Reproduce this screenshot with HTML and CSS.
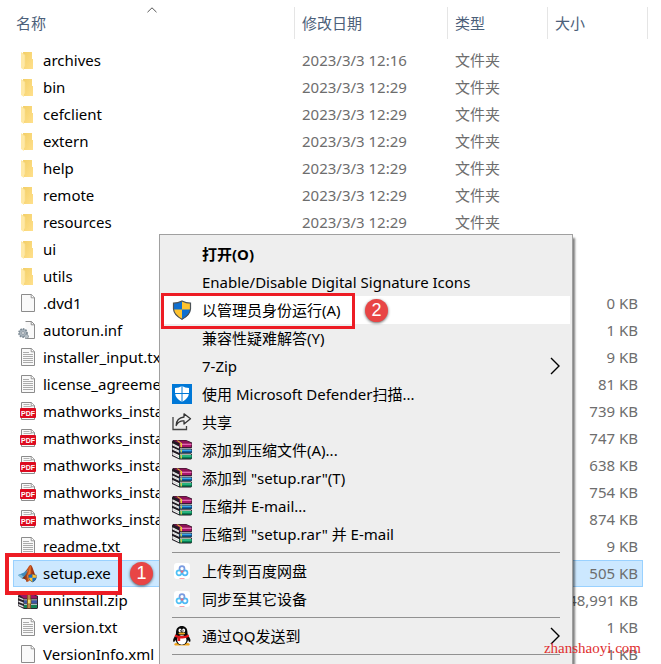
FILE: index.html
```
<!DOCTYPE html>
<html lang="zh-CN">
<head>
<meta charset="utf-8">
<title>setup.exe</title>
<link rel="stylesheet" href="styles.css">
</head>
<body>
<svg class="defs" aria-hidden="true">
  <defs>
    <linearGradient id="gold" x1="0" y1="0" x2="1" y2="1"><stop offset="0" stop-color="#f3cf67"/><stop offset="1" stop-color="#ffe08c"/></linearGradient>
    <linearGradient id="flame" x1="0" y1="0" x2="1" y2="0"><stop offset="0" stop-color="#4b2018"/><stop offset=".45" stop-color="#c9551f"/><stop offset="1" stop-color="#7c1a10"/></linearGradient>
  </defs>
  <symbol id="folder" viewBox="0 0 20 20">
    <path d="M5 1h9v7h1v10H6z" fill="url(#gold)"/>
    <path d="M3 1.5L7 4v11l-1 1v3l-3-2z" fill="#ffe9a6"/>
    <path d="M3 1.5L7 4v11" fill="none" stroke="#f7dc8c" stroke-width=".6"/>
  </symbol>
  <symbol id="page" viewBox="0 0 20 20">
    <path d="M3.500 .5h10l3 3v14h-13z" fill="#f9f9f9" stroke="#8c8c8c"/>
    <path d="M13.200 .5v3.300h3.300" fill="#fff" stroke="#8c8c8c" stroke-width=".9"/>
  </symbol>
  <symbol id="text" viewBox="0 0 20 20">
    <use href="#page"/>
    <path d="M5 4.500h6M5 6.500h10M5 8.500h10M5 10.500h10M5 12.500h10M5 14.500h10" stroke="#a2a2a2" stroke-width=".9"/>
  </symbol>
  <symbol id="inf" viewBox="0 0 20 20">
    <path d="M7.500 .5h6l3 3v14h-9" fill="#f9f9f9" stroke="#8c8c8c"/>
    <path d="M13.200 .5v3.300h3.300" fill="none" stroke="#8c8c8c"/>
    <circle cx="5" cy="12" r="4" fill="#a9b4bd" stroke="#7e8b95" stroke-width="1.800" stroke-dasharray="1.600 1"/>
    <circle cx="5" cy="12" r="1.300" fill="#fff" stroke="#6f7b84" stroke-width=".6"/>
    <circle cx="8.500" cy="15.500" r="2" fill="#b9c1c7" stroke="#7e8b95" stroke-dasharray="1 .7"/>
  </symbol>
  <symbol id="pdf" viewBox="0 0 20 20">
    <use href="#page"/>
    <path d="M5.500 2.500h6M5.500 4.500h8" stroke="#a2a2a2" stroke-width=".8"/>
    <rect x="2" y="6" width="16" height="10" rx="1" fill="#dd0b20"/>
    <text class="pdf-label" x="10" y="13.500" text-anchor="middle">PDF</text>
  </symbol>
  <symbol id="shield" viewBox="0 0 20 20">
    <path d="M10 1Q6 3.200 1.500 3.200V9Q2 15 10 19.500Z" fill="#0f6fd0"/>
    <path d="M10 1Q14 3.200 18.500 3.200V9Q18 15 10 19.500Z" fill="#ffc32e"/>
    <path d="M1.500 9.500H10V19.500Q2 15.500 1.500 9.500Z" fill="#ffc32e"/>
    <path d="M18.500 9.500H10V19.500Q18 15.500 18.500 9.500Z" fill="#0f6fd0"/>
    <path d="M10 1Q6 3.200 1.500 3.200V9Q2 15 10 19.300Q18 15 18.500 9V3.200Q14 3.200 10 1Z" fill="none" stroke="#4c5257" stroke-width="1.200"/>
  </symbol>
  <symbol id="matlab" viewBox="0 0 20 20">
    <path d="M0 11L6 8.500 9.500 5 8.500 12 4 14.500Z" fill="#3f88b8"/>
    <path d="M0 11l4 3.500 2-1.500-3-2.500Z" fill="#7bbad8"/>
    <path d="M6 8.500C9 7 10.500 1 12.500 1c2 0 3.500 8 6 13-3-2-4-1-5.500 1-1.500 2-3 3-4.500 3-.5-3-2-3.500-4.500-3.500C6 13 9 10 9.500 6Z" fill="url(#flame)"/>
    <path d="M12.500 1c-1 2-1 7-3.500 11l1.500 5c2-3 2.500-9 2-16Z" fill="#ef7d2c"/>
    <svg x="10" y="9.500" width="9" height="9" viewBox="0 0 20 20"><use href="#shield"/></svg>
  </symbol>
  <symbol id="books" viewBox="0 0 20 20">
    <path d="M0 1.500L1 0h13l6 2.500v5l-1 1 1 1v3l-1 1 1 1v4l-1 1H7.500L0 16z" fill="#201a22"/>
    <path d="M.5 3.200L7 6.500v2L.5 5.500zM.5 7.500L7 10.500v2.200L.5 9.800zM.5 12L7 15v3.300L.5 15z" fill="#f6f6f6"/>
    <path d="M.5 4.500L7 7.500M.5 8.700L7 11.700M.5 13.500l6.500 3.200" stroke="#aaa" stroke-width=".5"/>
    <path d="M1 .6h13l5.500 2.200L8 3.400z" fill="#8e1256"/>
    <path d="M7.500 3.200h12v4h-12z" fill="#a8166a"/>
    <path d="M8 4.300h11.500" stroke="#ec72b8" stroke-width="1.200"/>
    <path d="M8 8.400h11v1H8z" fill="#e8f3f5"/>
    <path d="M7.500 9.600h12.300v3H7.500z" fill="#0c5fa6"/>
    <path d="M8 10.400h11.500" stroke="#41aff0" stroke-width="1"/>
    <path d="M8 13.700h11v1H8z" fill="#e2f3e6"/>
    <path d="M7.500 15h12.300v3.500H7.500z" fill="#078455"/>
    <path d="M8 16h11.500" stroke="#42dba0" stroke-width="1.100"/>
    <path d="M4.500 .6H6l4 2.600v4H8.500v-4z" fill="#e8d32e"/>
    <path d="M8.500 9.600H10v3H8.500zM8.500 15H10v3.500H8.500z" fill="#c7c951"/>
  </symbol>
  <symbol id="zip" viewBox="0 0 20 20">
    <path d="M1 3h15l4 2v12l-1 1H6l-6-3V5z" fill="#2a252e"/>
    <path d="M1 3.500h14l4 2v2H6z" fill="#9b1762"/><path d="M6 8.500h13v1H6zM6 12.800h13v1H6z" fill="#d5ebf0"/>
    <path d="M6 9.500h13v2.800H6z" fill="#3d55a5"/><path d="M6 14h13v3H6z" fill="#168254"/>
    <path d="M.5 6l5 2v1.300l-5-2zM.5 9.500l5 2V13l-5-2zM.5 13l5 2v1.500l-5-2z" fill="#e8e8e8"/>
    <path d="M9 3.500h4v14H9z" fill="#8b5526"/><path d="M9.500 8h3.500v5H9.500z" fill="#f4da65" stroke="#75501a" stroke-width=".8"/><path d="M11 4v4M11 13v4" stroke="#e2b878"/>
  </symbol>
  <symbol id="defender" viewBox="0 0 20 20">
    <path d="M0 0h20v20H0z" fill="#0078d7"/>
    <path d="M10 2q-3 2-7 2v5q.5 5.500 7 9 6.500-3.500 7-9V4q-4 0-7-2z" fill="#fff"/><path d="M10 2v16M3 9.500h14" stroke="#0078d7"/>
  </symbol>
  <symbol id="share" viewBox="0 0 20 20">
    <path d="M1 5v12.500h13.500V14" fill="none" stroke="#444" stroke-width="1.300"/>
    <path d="M12 1.800l6.500 5L12 12V9Q7 8.500 4.200 13.500 4.500 5.800 12 5z" fill="none" stroke="#333" stroke-width="1.300" stroke-linejoin="round"/>
  </symbol>
  <symbol id="cloud" viewBox="0 0 20 20">
    <rect x="2" y="2" width="16" height="16" rx="3" fill="#fff"/>
    <circle cx="10" cy="7.700" r="2.500" fill="none" stroke="#7a9be0" stroke-width="1.700"/>
    <circle cx="7" cy="11.800" r="2.500" fill="none" stroke="#4fc1f5" stroke-width="1.700"/><circle cx="13" cy="11.800" r="2.500" fill="none" stroke="#4fb8f5" stroke-width="1.700"/>
    <path d="M7.800 8.800q2.200 2 4.400 0L10 12.500z" fill="#f0697b"/><path d="M7.500 17.500h5" stroke="#f5a3ad"/>
  </symbol>
  <symbol id="qq" viewBox="0 0 20 20">
    <path d="M3 19.500Q1 18 4 17h12q3 1 1 2.500z" fill="#f1a51b"/>
    <path d="M4 7C4 2 6.500 0 9.800 0S15.500 2 15.500 7q0 1.500 1 3 3 4 1.500 6-1 0-2-2-1 5-6.200 5T3.600 14q-1 2-2 2-1.500-2 1.400-6 1-1.500 1-3z" fill="#080808"/>
    <ellipse cx="9.800" cy="14" rx="4.700" ry="4.700" fill="#fff"/>
    <ellipse cx="8" cy="4.500" rx="1.500" ry="2" fill="#fff"/><ellipse cx="11.600" cy="4.500" rx="1.500" ry="2" fill="#fff"/><circle cx="8.500" cy="4.800" r=".6"/><circle cx="11.100" cy="4.800" r=".6"/>
    <ellipse cx="9.800" cy="7.500" rx="3.300" ry="1" fill="#efae24"/>
    <path d="M3 8.500q7 3 13.600 0l.5 2.300q-3 1.700-6.600 1.700l-2.300-.1V15H5.500v-3.200L2.700 10.700z" fill="#df171c"/>
  </symbol>
</svg>

<main class="explorer">
  <table class="files">
    <colgroup><col><col class="col-date"><col class="col-type"><col class="col-size"><col class="col-end"></colgroup>
    <thead>
      <tr><th class="name"><span class="head">名称<svg class="sort" viewBox="0 0 10 6"><path d="M.5 5.200L5 .8l4.500 4.400"/></svg></span></th><th><span class="head">修改日期</span></th><th><span class="head">类型</span></th><th><span class="head open">大小</span></th><th><span class="head"></span></th></tr>
    </thead>
    <tbody>
      <tr><td><span class="file"><svg><use href="#folder"/></svg>archives</span></td><td>2023/3/3 12:16</td><td>文件夹</td><td></td><td></td></tr>
      <tr><td><span class="file"><svg><use href="#folder"/></svg>bin</span></td><td>2023/3/3 12:29</td><td>文件夹</td><td></td><td></td></tr>
      <tr><td><span class="file"><svg><use href="#folder"/></svg>cefclient</span></td><td>2023/3/3 12:29</td><td>文件夹</td><td></td><td></td></tr>
      <tr><td><span class="file"><svg><use href="#folder"/></svg>extern</span></td><td>2023/3/3 12:29</td><td>文件夹</td><td></td><td></td></tr>
      <tr><td><span class="file"><svg><use href="#folder"/></svg>help</span></td><td>2023/3/3 12:29</td><td>文件夹</td><td></td><td></td></tr>
      <tr><td><span class="file"><svg><use href="#folder"/></svg>remote</span></td><td>2023/3/3 12:29</td><td>文件夹</td><td></td><td></td></tr>
      <tr><td><span class="file"><svg><use href="#folder"/></svg>resources</span></td><td>2023/3/3 12:29</td><td>文件夹</td><td></td><td></td></tr>
      <tr><td><span class="file"><svg><use href="#folder"/></svg>ui</span></td><td></td><td></td><td></td><td></td></tr>
      <tr><td><span class="file"><svg><use href="#folder"/></svg>utils</span></td><td></td><td></td><td></td><td></td></tr>
      <tr><td><span class="file"><svg><use href="#page"/></svg>.dvd1</span></td><td></td><td></td><td class="size">0 KB</td><td></td></tr>
      <tr><td><span class="file"><svg><use href="#inf"/></svg>autorun.inf</span></td><td></td><td></td><td class="size">1 KB</td><td></td></tr>
      <tr><td><span class="file"><svg><use href="#text"/></svg>installer_input.txt</span></td><td></td><td></td><td class="size">9 KB</td><td></td></tr>
      <tr><td><span class="file"><svg><use href="#text"/></svg>license_agreement</span></td><td></td><td></td><td class="size">81 KB</td><td></td></tr>
      <tr><td><span class="file"><svg><use href="#pdf"/></svg>mathworks_install</span></td><td></td><td></td><td class="size">739 KB</td><td></td></tr>
      <tr><td><span class="file"><svg><use href="#pdf"/></svg>mathworks_install</span></td><td></td><td></td><td class="size">747 KB</td><td></td></tr>
      <tr><td><span class="file"><svg><use href="#pdf"/></svg>mathworks_install</span></td><td></td><td></td><td class="size">638 KB</td><td></td></tr>
      <tr><td><span class="file"><svg><use href="#pdf"/></svg>mathworks_install</span></td><td></td><td></td><td class="size">754 KB</td><td></td></tr>
      <tr><td><span class="file"><svg><use href="#pdf"/></svg>mathworks_install</span></td><td></td><td></td><td class="size">874 KB</td><td></td></tr>
      <tr><td><span class="file"><svg><use href="#text"/></svg>readme.txt</span></td><td></td><td></td><td class="size">9 KB</td><td></td></tr>
      <tr class="selected"><td><span class="file"><svg><use href="#matlab"/></svg>setup.exe</span></td><td></td><td></td><td class="size">505 KB</td><td></td></tr>
      <tr><td><span class="file"><svg><use href="#zip"/></svg>uninstall.zip</span></td><td></td><td></td><td class="size">48,991 KB</td><td></td></tr>
      <tr><td><span class="file"><svg><use href="#text"/></svg>version.txt</span></td><td></td><td></td><td class="size">1 KB</td><td></td></tr>
      <tr><td><span class="file"><svg><use href="#page"/></svg>VersionInfo.xml</span></td><td></td><td></td><td class="size">1 KB</td><td></td></tr>
    </tbody>
  </table>

  <div class="menu" role="menu">
    <button class="item default" role="menuitem"><span class="icon"></span>打开(O)</button>
    <button class="item" role="menuitem"><span class="icon"></span>Enable/Disable Digital Signature Icons</button>
    <button class="item active" role="menuitem"><svg class="icon"><use href="#shield"/></svg>以管理员身份运行(A)</button>
    <button class="item" role="menuitem"><span class="icon"></span>兼容性疑难解答(Y)</button>
    <button class="item" role="menuitem"><span class="icon"></span>7-Zip<svg class="more" viewBox="0 0 10 18"><path d="M1 1l8 8-8 8"/></svg></button>
    <button class="item" role="menuitem"><svg class="icon"><use href="#defender"/></svg>使用 Microsoft Defender扫描...</button>
    <button class="item" role="menuitem"><svg class="icon"><use href="#share"/></svg>共享</button>
    <button class="item" role="menuitem"><svg class="icon"><use href="#books"/></svg>添加到压缩文件(A)...</button>
    <button class="item" role="menuitem"><svg class="icon"><use href="#books"/></svg>添加到 "setup.rar"(T)</button>
    <button class="item" role="menuitem"><svg class="icon"><use href="#books"/></svg>压缩并 E-mail...</button>
    <button class="item" role="menuitem"><svg class="icon"><use href="#books"/></svg>压缩到 "setup.rar" 并 E-mail</button>
    <hr>
    <button class="item" role="menuitem"><svg class="icon"><use href="#cloud"/></svg>上传到百度网盘</button>
    <button class="item" role="menuitem"><svg class="icon"><use href="#cloud"/></svg>同步至其它设备</button>
    <hr>
    <button class="item" role="menuitem"><svg class="icon"><use href="#qq"/></svg>通过QQ发送到<svg class="more" viewBox="0 0 10 18"><path d="M1 1l8 8-8 8"/></svg></button>
    <hr>
  </div>

  <div class="frame frame-file"></div>
  <div class="frame frame-menu"></div>
  <span class="badge badge-one">1</span>
  <span class="badge badge-two">2</span>
  <span class="watermark">zhanshaoyi.com</span>
</main>
</body>
</html>
```
FILE: styles.css
```
* { box-sizing: border-box; }

body {
  margin: 0;
  background: #fff;
  color: #000;
  font: 15px/27px "Noto Sans", "Noto Sans CJK SC", sans-serif;
}

.defs { position: absolute; width: 0; height: 0; }
.pdf-label { fill: #fff; font: 700 7px "Liberation Sans", Arial, sans-serif; }

.explorer {
  position: relative;
  height: 100vh;
  overflow: hidden;
}

/* File list */
.files {
  width: calc(100% - 26px);
  margin-left: 13px;
  table-layout: fixed;
  border-spacing: 0;
  white-space: nowrap;
}
.col-date { width: 153px; }
.col-type { width: 100px; }
.col-size { width: 95px; }
.col-end { width: 5px; }

th {
  padding: 7px 0 8px;
  color: #4c607a;
  font-weight: 400;
  text-align: left;
}
.head {
  display: block;
  position: relative;
  height: 32px;
  padding-left: 7px;
  border-right: 1px solid #e5e5e5;
  line-height: 32px;
}
.name .head { padding-left: 3px; }
.head.open { border-right: 0; }
th:last-child .head { padding: 0; }
.sort {
  position: absolute;
  top: 0;
  left: 50%;
  width: 10px;
  height: 6px;
  margin-left: -7px;
  fill: none;
  stroke: #555;
}

td {
  height: 27px;
  padding: 0 0 0 7px;
  color: #6d6d6d;
  line-height: 27px;
}
td:first-child { padding-left: 5px; color: #000; }
td:last-child { padding: 0; }
td.size { padding-left: 0; padding-right: 5px; text-align: right; }
.file {
  display: flex;
  align-items: center;
  gap: 5px;
}
.file svg { flex: none; width: 20px; height: 20px; }

.selected td:not(:last-child) {
  background: #cce8ff;
  box-shadow: inset 0 1px #99d1ff, inset 0 -1px #99d1ff;
}
.selected td:first-child { box-shadow: inset 0 1px #99d1ff, inset 0 -1px #99d1ff, inset 1px 0 #99d1ff; }
.selected td.size { box-shadow: inset 0 1px #99d1ff, inset 0 -1px #99d1ff, inset -1px 0 #99d1ff; }

/* Context menu */
.menu {
  position: absolute;
  top: 234px;
  bottom: -10px;
  left: 159px;
  width: 414px;
  padding: 5px 2px;
  border: 1px solid #a0a0a0;
  background: #eee;
  box-shadow: 2px 4px 2px rgba(0, 0, 0, .5);
}
.item {
  display: flex;
  align-items: center;
  gap: 10px;
  width: 100%;
  height: 28px;
  padding: 0 10px;
  border: 0;
  background: none;
  color: #000;
  font: inherit;
  text-align: left;
  white-space: pre;
}
.item.default { font-weight: 700; }
.item.active { background: #fff; }
.icon { flex: none; width: 20px; height: 20px; }
.more {
  width: 10px;
  height: 18px;
  margin-left: auto;
  fill: none;
  stroke: #000;
  stroke-width: 1.4;
}
hr {
  height: 1px;
  margin: 4px 10px;
  border: 0;
  background: #919191;
}

/* Step marks */
.frame { position: absolute; border: 4px solid #ed1c24; }
.frame-file { top: 553px; left: 5px; width: 117px; height: 42px; }
.frame-menu { top: 293px; left: 161px; width: 194px; height: 36px; border-width: 3px; }
.badge {
  position: absolute;
  width: 23px;
  height: 23px;
  border-radius: 50%;
  background: #e84545;
  box-shadow: 0 1px 3px rgba(0, 0, 0, .6);
  color: #fff;
  font: 18px/23px "Liberation Sans", Arial, sans-serif;
  text-align: center;
}
.badge-one { top: 562px; left: 130px; }
.badge-two { top: 299px; left: 365px; }
.watermark {
  position: absolute;
  right: 20px;
  bottom: 8px;
  color: #e03030;
  font: 15px/16px "Liberation Serif", "Times New Roman", serif;
}
```
